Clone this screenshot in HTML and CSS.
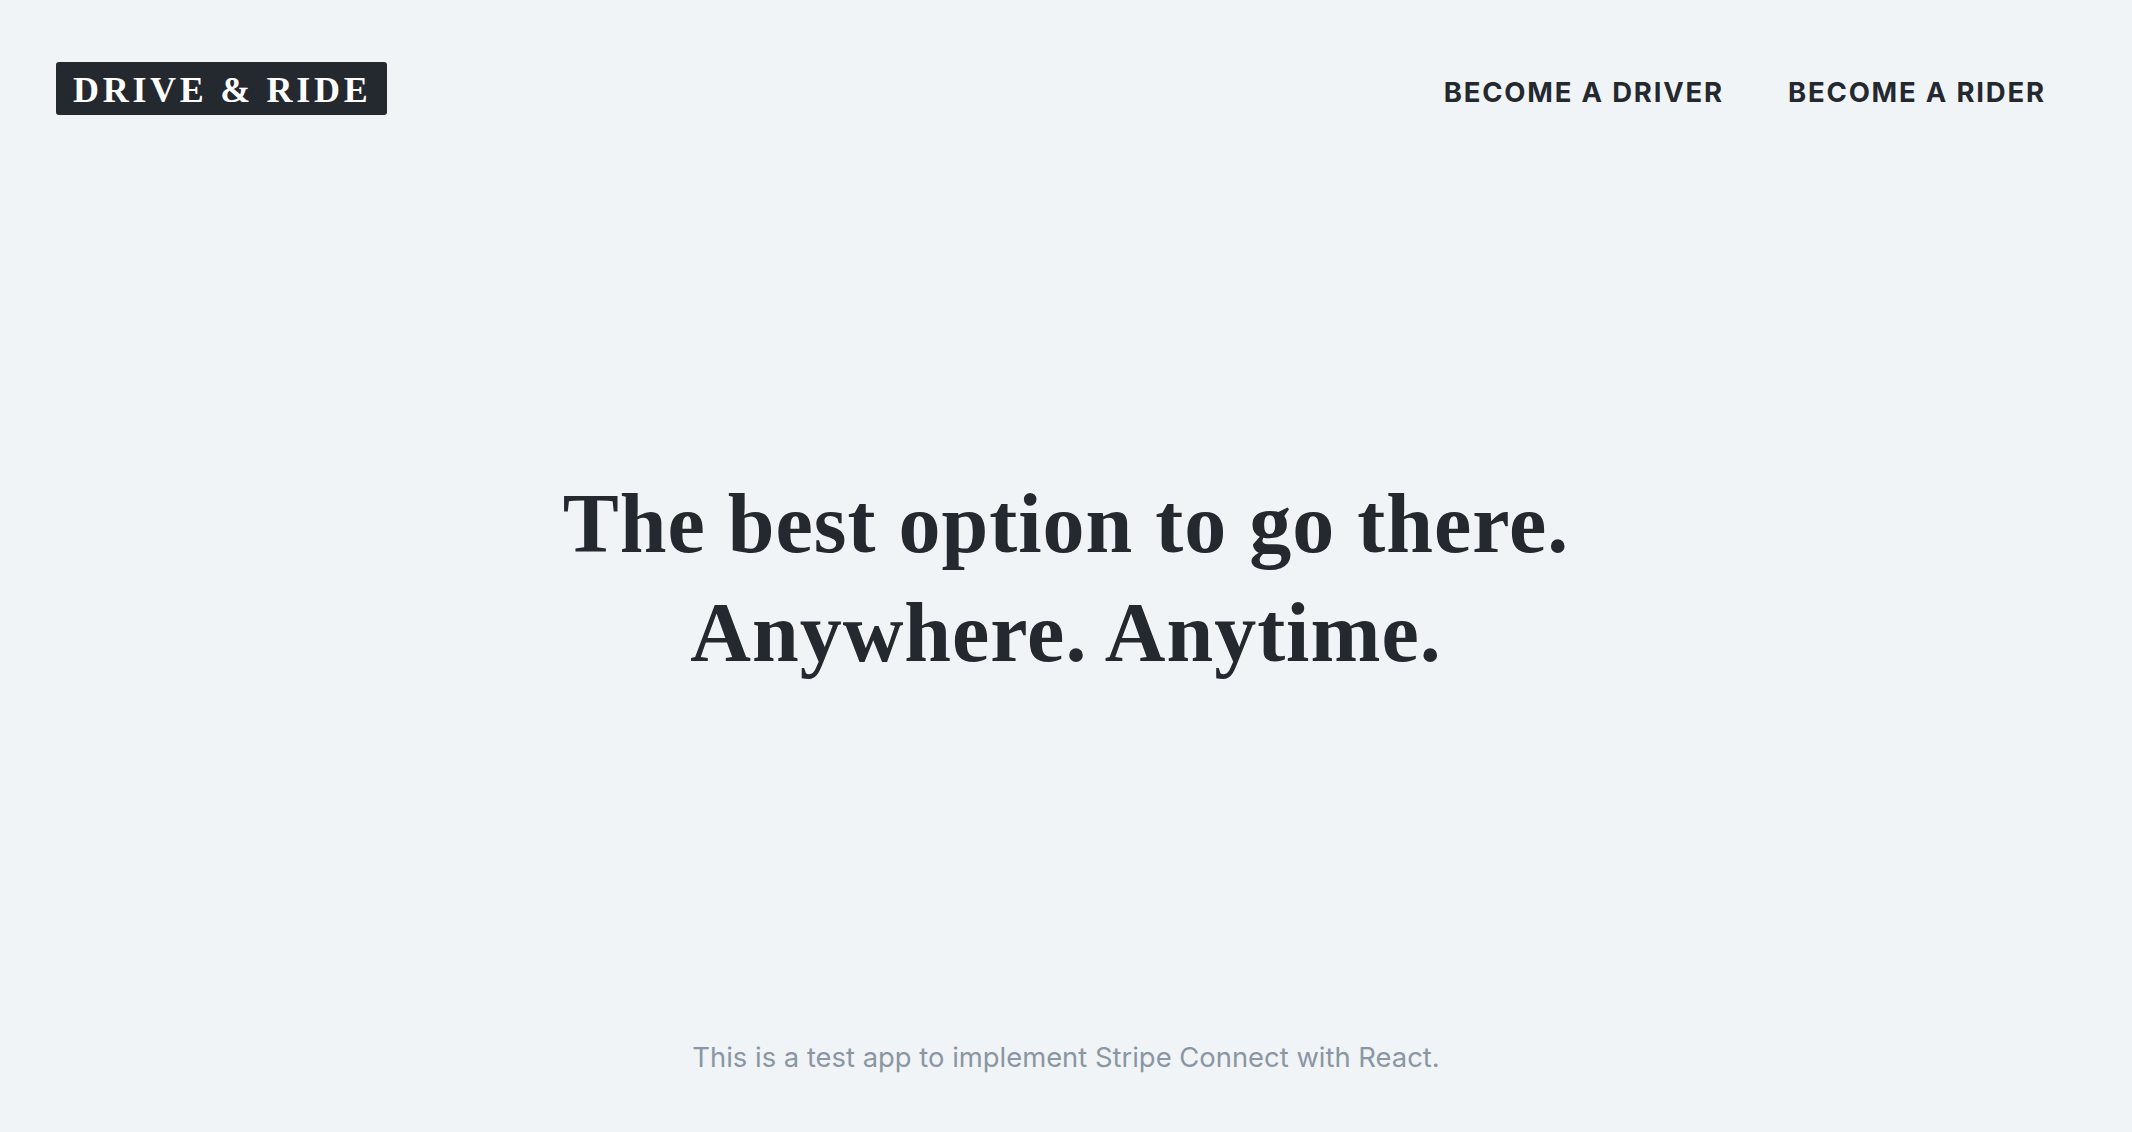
FILE: index.html
```html
<!DOCTYPE html>
<html lang="en">
<head>
<meta charset="utf-8">
<title>Drive &amp; Ride</title>
<link rel="stylesheet" href="styles.css">
</head>
<body>
<div class="page">
  <header class="header">
    <a class="logo" href="#">DRIVE &amp; RIDE</a>
    <nav class="nav">
      <a class="nav-link" href="#">BECOME A DRIVER</a>
      <a class="nav-link" href="#">BECOME A RIDER</a>
    </nav>
  </header>
  <main class="hero">
    <h1 class="headline">The best option to go there.<br>Anywhere. Anytime.</h1>
  </main>
  <footer class="footer">This is a test app to implement Stripe Connect with React.</footer>
</div>
</body>
</html>
```
FILE: styles.css
```css
* { box-sizing: border-box; }
html, body { margin: 0; padding: 0; }
body {
  background: #f0f4f7;
  color: #24282f;
  font-family: Inter, "Noto Sans", sans-serif;
}
.page {
  min-height: 100vh;
  display: flex;
  flex-direction: column;
}
.header {
  display: flex;
  align-items: center;
  justify-content: space-between;
  padding: 62px 88px 0 56px;
}
.logo {
  display: block;
  background: #24282f;
  color: #ffffff;
  text-decoration: none;
  font-family: "Liberation Serif", serif;
  font-weight: 700;
  font-size: 36px;
  line-height: 50px;
  height: 53px;
  padding: 3px 16px 0 17px;
  letter-spacing: 3.7px;
  border-radius: 3px;
}
.nav {
  display: flex;
  gap: 66px;
  margin-top: 6px;
}
.nav-link {
  color: #24282f;
  text-decoration: none;
  font-weight: 650;
  font-size: 27.5px;
  letter-spacing: 0.065em;
  margin-right: -0.065em;
}
.hero {
  flex: 1;
  display: flex;
  align-items: center;
  justify-content: center;
}
.headline {
  margin: 0;
  text-align: center;
  font-family: "Liberation Serif", serif;
  font-weight: 700;
  font-size: 84px;
  line-height: 109px;
  letter-spacing: 1px;
}
.footer {
  text-align: center;
  color: #8a96a3;
  font-size: 27.4px;
  padding-bottom: 58px;
}
```
